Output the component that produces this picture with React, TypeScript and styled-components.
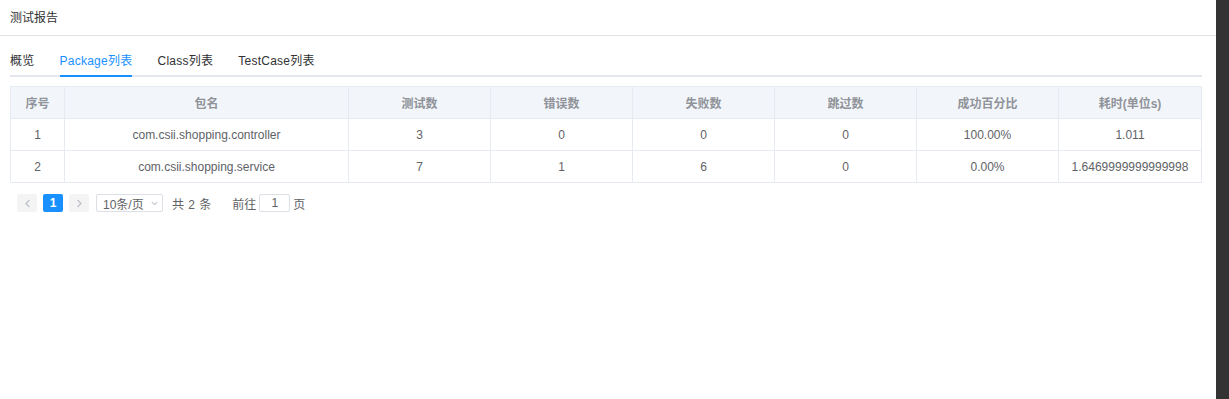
import styled, { createGlobalStyle } from 'styled-components';
import { FaChevronLeft, FaChevronRight, FaChevronDown } from 'react-icons/fa';

const GlobalStyle = createGlobalStyle`
  html, body {
    margin: 0;
    padding: 0;
    background: #fff;
  }
  body {
    font-family: 'Liberation Sans', Arial, 'Noto Sans CJK SC', sans-serif;
    font-size: 12px;
    color: #303133;
  }
`;

const Page = styled.div`
  display: flex;
  width: 1229px;
  height: 399px;
`;

const Main = styled.div`
  flex: 1;
  display: flex;
  flex-direction: column;
`;

const ScrollBar = styled.div`
  width: 14px;
  background: #333333;
`;

const Header = styled.div`
  height: 36px;
  padding: 0 10px 2px;
  display: flex;
  align-items: center;
  border-bottom: 1px solid #dfe3e8;
  font-size: 12px;
  color: #303133;
  box-sizing: border-box;
`;

const Content = styled.div`
  padding: 11px 14px 0 10px;
`;

const TabNav = styled.div`
  display: flex;
  gap: 25px;
  border-bottom: 2px solid #e4e7ed;
  height: 28px;
`;

const Tab = styled.div<{ active?: boolean }>`
  height: 28px;
  line-height: 28px;
  font-size: 12px;
  letter-spacing: 0.25px;
  color: ${(p) => (p.active ? '#1890ff' : '#303133')};
  position: relative;
  &::after {
    content: '';
    position: absolute;
    left: 0;
    right: 0;
    bottom: -2px;
    height: 2px;
    background: ${(p) => (p.active ? '#1890ff' : 'transparent')};
  }
`;

const Table = styled.table`
  margin-top: 9px;
  width: 1191px;
  border-collapse: collapse;
  table-layout: fixed;
  font-size: 12px;
`;

const Th = styled.th`
  height: 31px;
  padding: 0;
  background: #f2f6fb;
  border: 1px solid #e6ebf2;
  color: #909399;
  font-weight: bold;
  text-align: center;
`;

const Td = styled.td`
  height: 31px;
  padding: 0;
  border: 1px solid #e6ebf2;
  color: #606266;
  text-align: center;
  white-space: nowrap;
`;

const Pager = styled.div`
  display: flex;
  align-items: center;
  margin-top: 11px;
  padding-left: 7px;
  font-size: 12px;
  color: #606266;
  height: 18px;
`;

const PageBtn = styled.div<{ active?: boolean }>`
  width: 20px;
  height: 18px;
  margin-right: 6px;
  display: flex;
  align-items: center;
  justify-content: center;
  background: ${(p) => (p.active ? '#1890ff' : '#f4f4f5')};
  color: ${(p) => (p.active ? '#fff' : '#c0c4cc')};
  font-weight: bold;
  font-size: 12px;
  border-radius: 2px;
`;

const Select = styled.div`
  width: 67px;
  height: 18px;
  box-sizing: border-box;
  border: 1px solid #dcdfe6;
  border-radius: 2px;
  margin-left: 1px;
  display: flex;
  align-items: center;
  justify-content: space-between;
  padding: 0 4px 0 6px;
  color: #606266;
`;

const Total = styled.span`
  margin-left: 9px;
  word-spacing: 1px;
`;

const Jumper = styled.span`
  margin-left: 21px;
  display: flex;
  align-items: center;
`;

const JumpInput = styled.div`
  width: 31px;
  height: 18px;
  box-sizing: border-box;
  border: 1px solid #dcdfe6;
  border-radius: 2px;
  margin: 0 3px 0 3px;
  display: flex;
  align-items: center;
  justify-content: center;
  color: #606266;
`;

const columns = ['序号', '包名', '测试数', '错误数', '失败数', '跳过数', '成功百分比', '耗时(单位s)'];
const widths = [54, 284, 142, 142, 142, 142, 142, 143];

const rows = [
  ['1', 'com.csii.shopping.controller', '3', '0', '0', '0', '100.00%', '1.011'],
  ['2', 'com.csii.shopping.service', '7', '1', '6', '0', '0.00%', '1.6469999999999998'],
];

const tabs = ['概览', 'Package列表', 'Class列表', 'TestCase列表'];

const App = () => {
  return (
    <Page>
      <GlobalStyle />
      <Main>
        <Header>测试报告</Header>
        <Content>
          <TabNav>
            {tabs.map((t, i) => (
              <Tab key={t} active={i === 1}>
                {t}
              </Tab>
            ))}
          </TabNav>
          <Table>
            <colgroup>
              {widths.map((w, i) => (
                <col key={i} style={{ width: w }} />
              ))}
            </colgroup>
            <thead>
              <tr>
                {columns.map((c) => (
                  <Th key={c}>{c}</Th>
                ))}
              </tr>
            </thead>
            <tbody>
              {rows.map((r) => (
                <tr key={r[0]}>
                  {r.map((v, i) => (
                    <Td key={i}>{v}</Td>
                  ))}
                </tr>
              ))}
            </tbody>
          </Table>
          <Pager>
            <PageBtn>
              <FaChevronLeft size={9} />
            </PageBtn>
            <PageBtn active>1</PageBtn>
            <PageBtn>
              <FaChevronRight size={9} />
            </PageBtn>
            <Select>
              10条/页
              <FaChevronDown size={7} color="#c0c4cc" />
            </Select>
            <Total>共 2 条</Total>
            <Jumper>
              前往
              <JumpInput>1</JumpInput>
              页
            </Jumper>
          </Pager>
        </Content>
      </Main>
      <ScrollBar />
    </Page>
  );
};

export default App;
